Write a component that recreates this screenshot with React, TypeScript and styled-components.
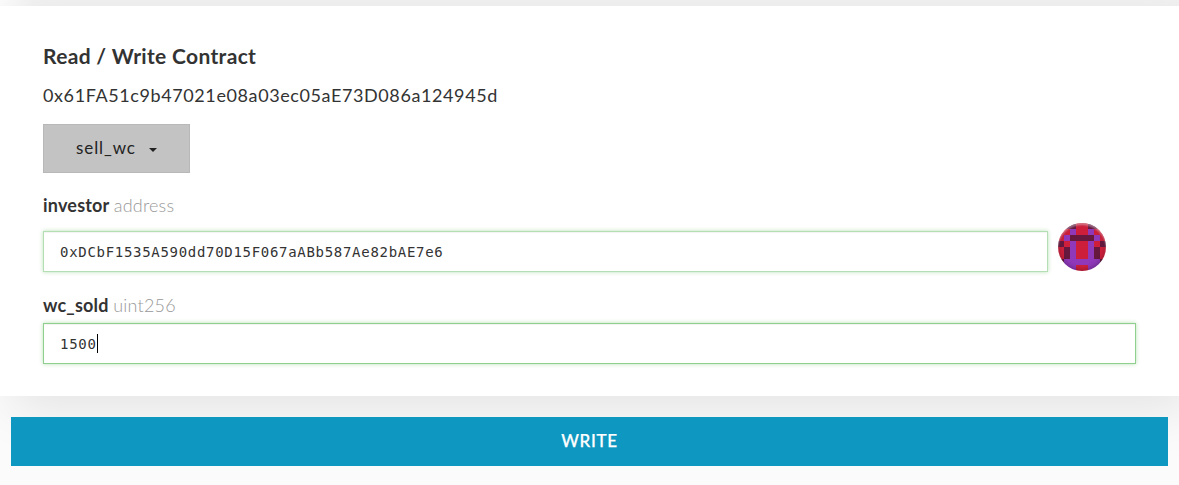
import React from "react";
import styled, { createGlobalStyle } from "styled-components";

const GlobalStyle = createGlobalStyle`
  * { box-sizing: border-box; }
  body {
    margin: 0;
    background: #fbfbfb;
    color: #333;
    font-family: Lato, "Open Sans", sans-serif;
    overflow: hidden;
  }
`;

const Page = styled.main`
  height: 485px;
  padding-top: 6px;
  overflow: hidden;
  background: linear-gradient(to right, #fbfbfb, #f2f2f2 34px) top / 100% 6px no-repeat, #fbfbfb;
`;

const Panel = styled.section`
  height: 390px;
  padding: 36px 43px 0;
  background: #fff;
  box-shadow: 12px 16px 47px 0 rgba(0, 0, 0, 0.09);
`;

const Title = styled.h4`
  margin: 0;
  font-size: 21px;
  line-height: 28px;
  font-weight: 700;
  letter-spacing: 0.33px;
`;

const ContractAddress = styled.p`
  margin: 11px 0 0;
  font-size: 18px;
  line-height: 28px;
  letter-spacing: 0.6px;
`;

const Dropdown = styled.button`
  display: flex;
  align-items: center;
  width: 147px;
  height: 49px;
  margin-top: 15px;
  padding: 0 32px 2px;
  border: 1px solid #b8b8b8;
  background: #c3c3c3;
  color: #222;
  font: 400 17px/24px Lato, sans-serif;
  letter-spacing: 0.9px;
`;

const Caret = styled.span`
  margin: 4px 0 0 13px;
  border: 4px solid transparent;
  border-top-color: #222;
  border-bottom: 0;
`;

const Label = styled.label<{ $top: number; $bottom: number }>`
  display: block;
  margin: ${(p) => p.$top}px 0 ${(p) => p.$bottom}px;
  font-size: 18px;
  line-height: 24px;
  font-weight: 700;
  letter-spacing: 0.2px;
`;

const TypeName = styled.span`
  color: #999;
  font-weight: 300;
`;

const FieldRow = styled.div`
  display: flex;
  height: 49px;
  gap: 10px;
`;

const Field = styled.div<{ $active?: boolean }>`
  display: flex;
  align-items: center;
  width: ${(p) => (p.$active ? "1093px" : "1005px")};
  height: 41px;
  margin-top: ${(p) => (p.$active ? 0 : 8)}px;
  padding: 0 16px;
  border: 1px solid ${(p) => (p.$active ? "#8fd08f" : "#b4deb4")};
  box-shadow: inset 0 1px 1px rgba(0, 0, 0, 0.05), 0 0 4px rgba(93, 186, 90, 0.45);
  font: 400 14px/20px "DejaVu Sans Mono", monospace;
  letter-spacing: 0.7px;
`;

const Cursor = styled.span`
  width: 1px;
  height: 19px;
  background: #000;
`;

const Avatar = styled.div`
  display: grid;
  grid-template-columns: repeat(8, 6px);
  grid-auto-rows: 6px;
  position: relative;
  width: 48px;
  height: 48px;
  border-radius: 50%;
  overflow: hidden;
  &::after {
    content: "";
    position: absolute;
    inset: 0;
    border-radius: 50%;
    box-shadow: inset 0 2px 2px rgba(255, 255, 255, 0.4), inset 0 -1px 5px rgba(0, 0, 0, 0.3);
  }
`;

const Cell = styled.i<{ $color: string }>`
  background: ${(p) => p.$color};
`;

const palette: Record<string, string> = { r: "#cd1f3b", p: "#8f38b9", d: "#66183f" };
const blockies = [
  "rddrrddr",
  "rrprrprr",
  "rpddddpr",
  "drprrprd",
  "rdprrpdr",
  "rdprrpdr",
  "dppppppd",
  "ppprrppp",
].join("");

const WriteButton = styled.button`
  display: block;
  position: relative;
  width: 1157px;
  height: 49px;
  margin: 21px 11px 0;
  padding: 0 0 2px;
  border: 0;
  background: #0e97c0;
  color: #fff;
  font: 500 17px/24px Lato, sans-serif;
  letter-spacing: 0.7px;
  -webkit-text-stroke: 0.25px #fff;
`;

export default function App() {
  return (
    <>
      <GlobalStyle />
      <Page>
        <Panel>
          <Title>Read / Write Contract</Title>
          <ContractAddress>0x61FA51c9b47021e08a03ec05aE73D086a124945d</ContractAddress>
          <Dropdown>
            sell_wc
            <Caret />
          </Dropdown>
          <Label $top={20} $bottom={6}>
            investor <TypeName>address</TypeName>
          </Label>
          <FieldRow>
            <Field>0xDCbF1535A590dd70D15F067aABb587Ae82bAE7e6</Field>
            <Avatar>
              {[...blockies].map((c, i) => (
                <Cell key={i} $color={palette[c]} />
              ))}
            </Avatar>
          </FieldRow>
          <Label $top={21} $bottom={6}>
            wc_sold <TypeName>uint256</TypeName>
          </Label>
          <Field $active>
            1500
            <Cursor />
          </Field>
        </Panel>
        <WriteButton>WRITE</WriteButton>
      </Page>
    </>
  );
}
